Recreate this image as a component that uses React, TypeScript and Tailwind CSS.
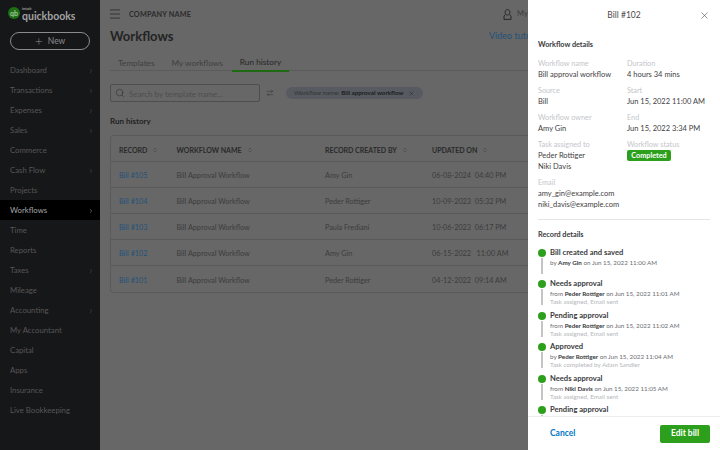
import React from "react";
import { ArrowRightLeft, ChevronRight, ChevronsUpDown, Menu, Search, X } from "lucide-react";

const nav = [
  ["Dashboard", true],
  ["Transactions", true],
  ["Expenses", true],
  ["Sales", true],
  ["Commerce", false],
  ["Cash Flow", true],
  ["Projects", false],
  ["Workflows", true],
  ["Time", false],
  ["Reports", false],
  ["Taxes", true],
  ["Mileage", false],
  ["Accounting", true],
  ["My Accountant", false],
  ["Capital", false],
  ["Apps", false],
  ["Insurance", false],
  ["Live Bookkeeping", false],
] as const;

const rows = [
  ["Bill #105", "Amy Gin", "06-08-2024  04:40 PM"],
  ["Bill #104", "Peder Rottiger", "10-09-2023  05:32 PM"],
  ["Bill #103", "Paula Frediani", "10-06-2023  06:17 PM"],
  ["Bill #102", "Amy Gin", "06-15-2022   11:00 AM"],
  ["Bill #101", "Peder Rottiger", "04-12-2022  09:14 AM"],
];

const timeline = [
  { title: "Bill created and saved", pre: "by", who: "Amy Gin", when: "on Jun 15, 2022 11:00 AM", note: "" },
  { title: "Needs approval", pre: "from", who: "Peder Rottiger", when: "on Jun 15, 2022 11:01 AM", note: "Task assigned, Email sent" },
  { title: "Pending approval", pre: "from", who: "Peder Rottiger", when: "on Jun 15, 2022 11:02 AM", note: "Task assigned, Email sent" },
  { title: "Approved", pre: "by", who: "Peder Rottiger", when: "on Jun 15, 2022 11:04 AM", note: "Task completed by Adam Sandler" },
  { title: "Needs approval", pre: "from", who: "Niki Davis", when: "on Jun 15, 2022 11:05 AM", note: "Task assigned, Email sent" },
  { title: "Pending approval", pre: "", who: "", when: "", note: "" },
];

function Sidebar() {
  return (
    <aside className="w-[100px] h-full shrink-0 bg-[#161719]">
      <div className="h-[30px] pl-2 pt-[7px] flex gap-[2px]">
        <div className="w-3 h-3 rounded-full bg-[#1d6f13] flex items-center justify-center text-[7px] leading-none font-bold text-[#a3c79e]">
          qb
        </div>
        <div className="flex flex-col text-[#a2a2a2]">
          <span className="text-[4px] leading-[4px] font-bold">intuit</span>
          <span className="text-[10.5px] leading-[10px] font-bold">quickbooks</span>
        </div>
      </div>
      <div className="h-[30px] flex items-start pt-[2px] px-[10px]">
        <div className="w-20 h-[18px] rounded-full border border-[#8c8c8c] flex items-center justify-center gap-[5px] text-[8.5px] text-[#8c8c8c]">
          <span className="text-[14px] leading-none font-light">+</span>
          New
        </div>
      </div>
      <nav>
        {nav.map(([label, more]) => (
          <div
            key={label}
            className={
              label === "Workflows"
                ? "h-5 pl-[10px] pr-[6px] pt-[2px] flex items-center justify-between text-[7.75px] bg-black text-[#a8a8a8]"
                : "h-5 pl-[10px] pr-[6px] pt-[2px] flex items-center justify-between text-[7.75px] text-[#565656]"
            }
          >
            {label}
            {more && <ChevronRight size={6} strokeWidth={2} />}
          </div>
        ))}
      </nav>
    </aside>
  );
}

function SortHead({ label, className }: { label: string; className: string }) {
  return (
    <div className={className + " flex items-center gap-[5px]"}>
      {label}
      <ChevronsUpDown size={6} strokeWidth={2} className="text-[#3c3c3c]" />
    </div>
  );
}

function Main() {
  return (
    <main className="flex-1 min-w-0 h-full bg-[#676767] pl-[10px] text-[#2d2d2d]">
      <header className="h-7 flex items-center">
        <Menu size={14} strokeWidth={1.25} className="-ml-[2px] text-[#222]" />
        <span className="ml-[7px] mt-[2px] w-[374px] text-[7.25px] font-bold tracking-wide text-[#2b2b2b]">COMPANY NAME</span>
        <div className="flex items-center gap-[5px] text-[7.5px] text-[#3c3c3c]">
          <svg width="9" height="11" viewBox="0 0 9 11" fill="none" stroke="#222" strokeWidth="0.9">
            <path d="M4.5.6c1.5 0 2.4 1.1 2.4 2.6S6 6 4.5 6 2.1 4.7 2.1 3.2 3 .6 4.5.6Z" />
            <path d="M2.5 5.4 1 7v3.4h7V7L6.5 5.4" />
          </svg>
          <span className="whitespace-nowrap">My</span>
        </div>
      </header>
      <div className="h-[16px] flex items-center">
        <h1 className="w-[379px] text-[13px] font-bold text-[#232323] leading-none">Workflows</h1>
        <span className="text-[9px] text-[#23527a] whitespace-nowrap">Video tutorials</span>
      </div>
      <div className="mt-[10px] h-[17px] pt-[2px] flex items-center border-b border-[#5b5b5b] text-[8.25px] text-[#3f3f3f]">
        <span className="ml-2">Templates</span>
        <span className="ml-[17px]">My workflows</span>
        <span className="ml-[9px] h-[15px] px-2 flex items-center border-b-2 border-[#1d6a12] text-[#262626] box-content">
          Run history
        </span>
      </div>
      <div className="mt-[13px] flex items-center">
        <div className="w-[150px] h-[18px] rounded-[2px] border border-[#4e4e4e] flex items-center gap-[4px] pl-[4px] text-[8px] text-[#4e4e4e]">
          <Search size={10} strokeWidth={1.5} className="text-[#333]" />
          <span className="mt-[2px]">Search by template name...</span>
        </div>
        <ArrowRightLeft size={8} strokeWidth={1.5} className="ml-[6px] text-[#333]" />
        <div className="ml-[12px] h-3 px-[8px] rounded-full bg-[#575a60] flex items-center gap-[2px] text-[6.25px] whitespace-nowrap">
          <span className="text-[#333]">Workflow name:</span>
          <b className="text-[#1d1d1d]">Bill approval workflow</b>
          <X size={7} strokeWidth={1.5} className="ml-[2px] text-[#222]" />
        </div>
      </div>
      <h2 className="mt-[13px] text-[8px] font-bold text-[#222] leading-[12px]">Run history</h2>
      <div className="mt-2 w-[600px] border border-[#5a5a5a] rounded-[3px]">
        <div className="h-[26px] pt-[3px] flex items-center pl-2 text-[7px] font-bold text-[#2a2a2a] border-b border-[#5a5a5a]">
          <SortHead label="RECORD" className="w-[57.5px]" />
          <SortHead label="WORKFLOW NAME" className="w-[148.5px]" />
          <SortHead label="RECORD CREATED BY" className="w-[107px]" />
          <SortHead label="UPDATED ON" className="w-[120px]" />
        </div>
        {rows.map(([bill, who, updated], i) => (
          <div
            key={bill}
            className={
              i < 4
                ? "h-[26px] pt-[4px] flex items-center pl-2 text-[7.25px] text-[#3c3c3c] border-b border-[#5a5a5a]"
                : "h-[26px] pt-[4px] flex items-center pl-2 text-[7.25px] text-[#3c3c3c]"
            }
          >
            <span className="w-[57.5px] text-[#23527a]">{bill}</span>
            <span className="w-[148.5px]">Bill Approval Workflow</span>
            <span className="w-[107px]">{who}</span>
            <span className="w-[120px] whitespace-pre">{updated}</span>
          </div>
        ))}
      </div>
    </main>
  );
}

function Field({ label, children }: { label: string; children: React.ReactNode }) {
  return (
    <div className="mb-[5px] whitespace-nowrap">
      <div className="text-[7.25px] leading-[11px] text-[#c4c6ca]">{label}</div>
      <div className="text-[7.5px] leading-[11px] text-[#3f4143]">{children}</div>
    </div>
  );
}

function Drawer() {
  return (
    <section className="absolute right-0 top-0 w-[192px] h-full bg-white flex flex-col">
      <div className="h-[30px] shrink-0 relative flex items-center justify-center text-[8.5px] text-[#4a4a4a]">
        Bill #102
        <X size={11} strokeWidth={1.25} className="absolute right-[10px] top-[10px] text-[#444]" />
      </div>
      <div className="flex-1 min-h-0 overflow-hidden px-[10px]">
        <h3 className="mt-[9px] mb-[7px] text-[7.25px] leading-[12px] font-bold text-[#393a3d]">Workflow details</h3>
        <div className="grid grid-cols-[89px_1fr]">
          <Field label="Workflow name">Bill approval workflow</Field>
          <Field label="Duration">4 hours 34 mins</Field>
          <Field label="Source">Bill</Field>
          <Field label="Start">Jun 15, 2022 11:00 AM</Field>
          <Field label="Workflow owner">Amy Gin</Field>
          <Field label="End">Jun 15, 2022 3:34 PM</Field>
          <Field label="Task assigned to">
            Peder Rottiger
            <br />
            Niki Davis
          </Field>
          <div>
            <div className="text-[7.25px] leading-[11px] text-[#c4c6ca]">Workflow status</div>
            <div className="w-[44px] h-[11px] rounded-[2px] bg-[#2ca01c] text-white text-[7.25px] font-bold leading-[11px] text-center">
              Completed
            </div>
          </div>
        </div>
        <Field label="Email">
          amy_gin@example.com
          <br />
          niki_davis@example.com
        </Field>
        <div className="mt-[9px] border-t border-[#e3e5e8]" />
        <h3 className="mt-[9px] mb-[6px] text-[7.25px] leading-[12px] font-bold text-[#393a3d]">Record details</h3>
        {timeline.map((t, i) => (
          <div key={i} className={i === 0 ? "flex gap-[4px] h-[31px]" : "flex gap-[4px] h-[31.6px]"}>
            <div className="w-2 shrink-0 flex flex-col items-center pt-[2px]">
              <div className="w-2 h-2 rounded-full bg-[#2ca01c]" />
              <div className="w-[2px] h-[16px] mt-[1px] bg-[#c2c4c7]" />
            </div>
            <div className="min-w-0">
              <div className="text-[7.6px] leading-[11px] font-bold text-[#393a3d] whitespace-nowrap">{t.title}</div>
              {t.who && (
                <div className="text-[6.25px] leading-[9px] text-[#6b6c72] whitespace-nowrap">
                  {t.pre} <b className="text-[#393a3d]">{t.who}</b> {t.when}
                </div>
              )}
              {t.note && <div className="text-[6.25px] leading-[8px] text-[#b5b7bb] whitespace-nowrap">{t.note}</div>}
            </div>
          </div>
        ))}
      </div>
      <footer className="h-[34px] shrink-0 border-t border-[#eceef1] flex items-center justify-between pl-[22px] pr-[10px] bg-white">
        <span className="text-[8.5px] font-bold text-[#0077c5]">Cancel</span>
        <div className="w-[50px] h-[18px] rounded-[2px] bg-[#2ca01c] text-white text-[8.5px] font-bold flex items-center justify-center">
          Edit bill
        </div>
      </footer>
    </section>
  );
}

export default function App() {
  return (
    <div className="relative w-[720px] h-[450px] overflow-hidden flex antialiased font-['Lato',sans-serif]">
      <Sidebar />
      <Main />
      <Drawer />
    </div>
  );
}
